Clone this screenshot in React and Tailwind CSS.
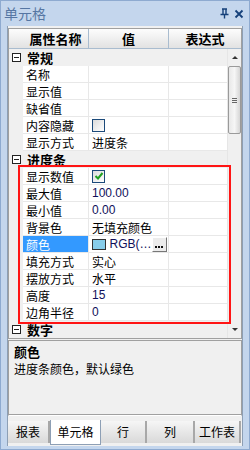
import React from "react";

const rows = [
  { cat: "常规" },
  { name: "名称" },
  { name: "显示值" },
  { name: "缺省值" },
  { name: "内容隐藏", check: "off" },
  { name: "显示方式", value: "进度条" },
  { cat: "进度条" },
  { name: "显示数值", check: "on" },
  { name: "最大值", num: "100.00" },
  { name: "最小值", num: "0.00" },
  { name: "背景色", value: "无填充颜色" },
  { name: "颜色", color: true, selected: true },
  { name: "填充方式", value: "实心" },
  { name: "摆放方式", value: "水平" },
  { name: "高度", num: "15" },
  { name: "边角半径", num: "0" },
  { cat: "数字" },
];

const tabs = [
  { label: "报表", w: "w-[42px]" },
  { label: "单元格", w: "w-[51px]", active: true },
  { label: "行", w: "w-[46px]" },
  { label: "列", w: "w-[48px]" },
  { label: "工作表", w: "w-[46px]" },
];

const Minus = () => (
  <div className="w-[9px] h-[9px] border border-[#222] bg-white flex items-center justify-center">
    <div className="w-[5px] h-[1px] bg-[#222]" />
  </div>
);

const Check = ({ on }) => (
  <div className="w-[13px] h-[13px] border border-[#1c4a7a] bg-gradient-to-br from-[#dcdcdc] to-white flex items-center justify-center">
    {on && (
      <svg width="10" height="10" viewBox="0 0 10 10">
        <path d="M1.5 5 L4 7.5 L8.5 2" fill="none" stroke="#21a121" strokeWidth="2" />
      </svg>
    )}
  </div>
);

const Row = ({ r }) => {
  if (r.cat) {
    return (
      <div className="h-[17px] shrink-0 flex items-center bg-[#f0f0f0]">
        <div className="w-[14px] flex justify-center">
          <Minus />
        </div>
        <span className="pl-[4px] font-bold text-[13px] leading-[13px]">{r.cat}</span>
      </div>
    );
  }
  return (
    <div className="h-[17px] shrink-0 flex bg-[#f0f0f0] leading-[13px]">
      <div className="w-[14px]" />
      <div className={`w-[66px] h-[17px] flex items-center pl-[3px] border-b border-r border-[#e8e8e8] ${r.selected ? "bg-[#3399ff] text-white" : "bg-white"}`}>
        <span>{r.name}</span>
      </div>
      <div className="w-[80px] h-[17px] flex items-center pl-[3px] bg-white border-b border-r border-[#e8e8e8] overflow-hidden whitespace-nowrap">
        {r.value && <span>{r.value}</span>}
        {r.check && <Check on={r.check === "on"} />}
        {r.num && <span className="font-['Liberation_Sans',sans-serif] text-[12px] text-[#10105a]">{r.num}</span>}
        {r.color && (
          <div className="flex items-center w-full">
            <div className="w-[14px] h-[11px] bg-[#87cdea] border border-[#333]" />
            <span className="ml-[4px] font-['Liberation_Sans',sans-serif] text-[12px] text-[#10105a]">RGB(…</span>
            <div className="ml-auto mr-[1px] w-[16px] h-[15px] bg-[#ececec] border border-t-white border-l-white border-r-[#777] border-b-[#777] flex items-end justify-center pb-[3px]">
              <div className="w-[8px] h-[2px] border-b-2 border-dotted border-[#111]" />
            </div>
          </div>
        )}
      </div>
      <div className="flex-1 h-[17px] bg-white border-b border-[#e8e8e8]" />
    </div>
  );
};

export default function App() {
  return (
    <div className="w-[250px] h-[450px] bg-[#c4d6ed] border border-[#8eaad0] flex flex-col font-['Noto_Sans_CJK_SC','Liberation_Sans',sans-serif] text-[12px] text-black overflow-hidden">
      <div className="h-[25px] flex items-center px-[3px] shrink-0">
        <span className="text-[14px] text-[#5676a3]">单元格</span>
        <div className="ml-auto flex items-center gap-[5px] mr-[2px]">
          <svg width="9" height="11" viewBox="0 0 9 11">
            <path d="M2 1 H7 M3 1 V6 M6 1 V6 M0.5 6.5 H8.5 M4.5 6.5 V10.5" stroke="#15407a" strokeWidth="1.4" fill="none" />
          </svg>
          <svg width="10" height="10" viewBox="0 0 10 10">
            <path d="M1.5 1.5 L8.5 8.5 M8.5 1.5 L1.5 8.5" stroke="#15407a" strokeWidth="1.8" />
          </svg>
        </div>
      </div>
      <div className="flex-1 mx-[6px] mb-[3px] flex flex-col bg-[#f0f0f0] border-l border-r border-[#8d9fb5]">
        <div className="relative mt-[2px] border border-[#a0a0a0] bg-white">
          <div className="h-[20px] flex bg-gradient-to-b from-[#fdfdfd] to-[#e2e2e2] border-b border-[#a9bccf] font-bold text-[13px] leading-[14px]">
            <div className="w-[14px]" />
            <div className="w-[66px] flex items-center justify-center border-r border-[#a9bccf]">属性名称</div>
            <div className="w-[80px] flex items-center justify-center border-r border-[#a9bccf]">值</div>
            <div className="flex-1 flex items-center justify-center">表达式</div>
          </div>
          <div className="flex h-[289px] overflow-hidden">
            <div className="flex-1 flex flex-col">
              {rows.map((r, i) => (
                <Row key={i} r={r} />
              ))}
            </div>
            <div className="w-[14px] bg-[#f0f0f0] border-l border-[#e6e6e6] flex flex-col items-center">
              <div className="h-[17px] flex items-center justify-center">
                <div className="w-0 h-0 border-l-[3px] border-r-[3px] border-b-[3px] border-l-transparent border-r-transparent border-b-[#333]" />
              </div>
              <div className="w-[13px] h-[68px] rounded-[2px] border border-[#9a9a9a] bg-gradient-to-r from-[#e8e8e8] via-[#f6f6f6] to-[#d6d6d6] flex flex-col items-center justify-center gap-[1px]">
                <div className="w-[5px] h-[1px] bg-[#666]" />
                <div className="w-[5px] h-[1px] bg-[#666]" />
                <div className="w-[5px] h-[1px] bg-[#666]" />
              </div>
              <div className="mt-auto h-[17px] flex items-center justify-center">
                <div className="w-0 h-0 border-l-[3px] border-r-[3px] border-t-[3px] border-l-transparent border-r-transparent border-t-[#333]" />
              </div>
            </div>
          </div>
          <div className="absolute left-[9px] top-[136px] w-[213px] h-[159px] border-2 border-[#ff1414] pointer-events-none" />
        </div>
        <div className="h-[76px] mt-[1px] border border-[#a0a0a0] border-b-white px-[5px] pt-[4px] shadow-[inset_0_-1px_0_#a0a0a0]">
          <div className="font-bold text-[13px] leading-[14px]">颜色</div>
          <div className="text-[12px] leading-[14px] mt-[3px]">进度条颜色，默认绿色</div>
        </div>
        <div className="mt-auto h-[26px] flex items-start bg-[#f0f0f0] text-[12px] leading-[14px]">
          {tabs.map((t, i) =>
            t.active ? (
              <div key={i} className={`${t.w} h-[25px] bg-white border-l border-r border-b border-[#8d9fb5] flex items-center justify-center`}>
                {t.label}
              </div>
            ) : (
              <div key={i} className={`${t.w} h-[22px] mt-[1px] bg-gradient-to-b from-[#f6f6f6] to-[#d9d9d9] border-r-2 border-[#a8a8a8] flex items-center justify-center`}>
                {t.label}
              </div>
            )
          )}
        </div>
      </div>
    </div>
  );
}
